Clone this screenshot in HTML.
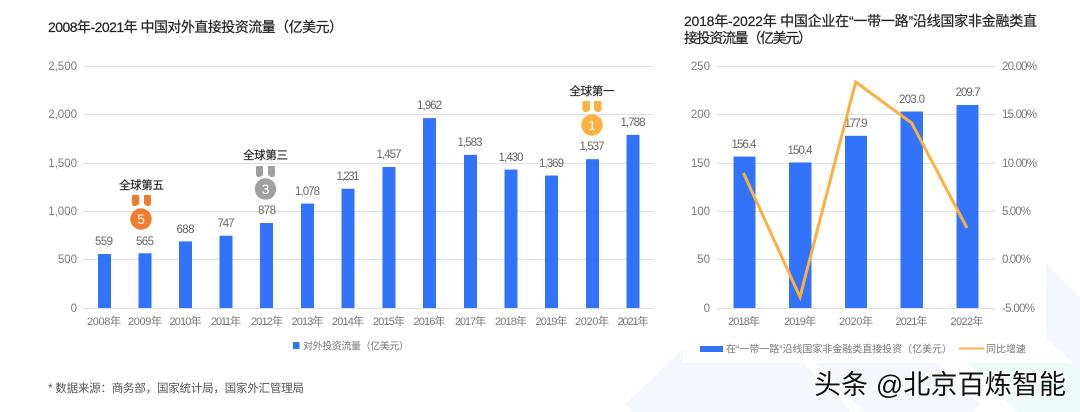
<!DOCTYPE html>
<html><head><meta charset="utf-8"><style>
html,body{margin:0;padding:0;background:#fff;width:1080px;height:412px;overflow:hidden}
svg{display:block}
.s{filter:blur(0.35px)}
text{font-family:"Liberation Sans","Noto Sans CJK SC",sans-serif}
.t{font-size:14px;fill:#222;stroke:#222;stroke-width:.2}
.a{font-size:11.5px;fill:#7a7a7a}
.v{font-size:11.5px;fill:#666;text-anchor:middle}
.x{font-size:11px;fill:#777;text-anchor:middle}
.e{text-anchor:end}
.l{font-size:10px;fill:#777}
.m{font-size:11.5px;fill:#222;text-anchor:middle;stroke:#222;stroke-width:.15}
.n{font-size:14px;fill:#fff;text-anchor:middle}
.g{stroke:#e0e0e2;stroke-width:1}
.b{fill:#3174fb}
</style></head><body>
<svg width="1080" height="412" viewBox="0 0 1080 412" xmlns="http://www.w3.org/2000/svg">
<rect width="1080" height="412" fill="#fff"/>
<g class="s">
<polygon points="625,404 683,349 683,363 803,363 852,412 632,412" fill="#f4f8fe"/>
<polygon points="815,363 937,363 980,405 973,412 864,412" fill="#f4f8fe"/>
<polygon points="968,363 1080,363 1080,412 1017,412" fill="#eefbf8"/>
<polygon points="1046,264 1080,298 1080,370 1046,338" fill="#f4f8fe"/>

<text class="t" x="48" y="32" textLength="295">2008年-2021年 中国对外直接投资流量（亿美元）</text>
<text class="t" x="684" y="26" textLength="353">2018年-2022年 中国企业在“一带一路”沿线国家非金融类直</text>
<text class="t" x="684" y="43" textLength="128">接投资流量（亿美元）</text>

<g class="g">
<line x1="84" x2="654" y1="66.5" y2="66.5"/><line x1="84" x2="654" y1="114.5" y2="114.5"/><line x1="84" x2="654" y1="163.5" y2="163.5"/><line x1="84" x2="654" y1="211.5" y2="211.5"/><line x1="84" x2="654" y1="259.5" y2="259.5"/><line x1="84" x2="654" y1="308.5" y2="308.5"/>
<line x1="717" x2="995" y1="66.5" y2="66.5"/><line x1="717" x2="995" y1="114.5" y2="114.5"/><line x1="717" x2="995" y1="163.5" y2="163.5"/><line x1="717" x2="995" y1="211.5" y2="211.5"/><line x1="717" x2="995" y1="259.5" y2="259.5"/><line x1="717" x2="995" y1="308.5" y2="308.5"/>
</g>

<g class="a e">
<text x="77" y="70">2,500</text><text x="77" y="118">2,000</text><text x="77" y="167">1,500</text><text x="77" y="215">1,000</text><text x="77" y="263">500</text><text x="77" y="312">0</text>
<text x="710" y="70">250</text><text x="710" y="118">200</text><text x="710" y="167">150</text><text x="710" y="215">100</text><text x="710" y="263">50</text><text x="710" y="312">0</text>
</g>
<g class="a">
<text x="1002" y="70" textLength="35">20.00%</text><text x="1002" y="118" textLength="35">15.00%</text><text x="1002" y="167" textLength="35">10.00%</text><text x="1002" y="215" textLength="29">5.00%</text><text x="1002" y="263" textLength="29">0.00%</text><text x="1002" y="312" textLength="33">-5.00%</text>
</g>

<g class="b">
<rect x="98" y="254" width="13" height="54"/><rect x="138.500" y="253.300" width="13" height="54.700"/><rect x="179" y="241.400" width="13" height="66.600"/><rect x="219.500" y="235.700" width="13" height="72.300"/><rect x="260" y="223" width="13" height="85"/><rect x="301" y="203.600" width="13" height="104.400"/><rect x="341.500" y="188.800" width="13" height="119.200"/><rect x="382.500" y="167" width="13" height="141"/><rect x="423" y="118.100" width="13" height="189.900"/><rect x="464" y="154.800" width="13" height="153.200"/><rect x="504.500" y="169.600" width="13" height="138.400"/><rect x="545" y="175.500" width="13" height="132.500"/><rect x="586" y="159.200" width="13" height="148.800"/><rect x="626.500" y="134.900" width="13" height="173.100"/>
<rect x="733.500" y="156.600" width="22" height="151.400"/><rect x="789" y="162.400" width="22.500" height="145.600"/><rect x="845" y="135.800" width="22" height="172.200"/><rect x="900.500" y="111.500" width="22.500" height="196.500"/><rect x="956.500" y="105" width="22" height="203"/>
</g>

<g class="v">
<text x="104" y="245" textLength="18">559</text><text x="145" y="245" textLength="18">565</text><text x="185.500" y="233" textLength="18">688</text><text x="226" y="227" textLength="17">747</text><text x="267" y="214" textLength="18">878</text>
<text x="307.500" y="195" textLength="25">1,078</text><text x="348" y="180" textLength="23">1,231</text><text x="389" y="158" textLength="25">1,457</text><text x="429.500" y="109" textLength="25">1,962</text><text x="470" y="146" textLength="25">1,583</text><text x="511" y="161" textLength="25">1,430</text><text x="551.500" y="167" textLength="25">1,369</text><text x="592" y="150" textLength="25">1,537</text><text x="633" y="126" textLength="25">1,788</text>
<text x="744" y="148" textLength="25">156.4</text><text x="800" y="154" textLength="25">150.4</text><text x="856" y="127" textLength="23">177.9</text><text x="912" y="103" textLength="26">203.0</text><text x="968" y="96" textLength="25">209.7</text>
</g>

<g class="x">
<text x="104" y="325" textLength="34">2008年</text><text x="145" y="325" textLength="34">2009年</text><text x="185.500" y="325" textLength="32">2010年</text><text x="226" y="325" textLength="30">2011年</text><text x="267" y="325" textLength="32">2012年</text><text x="307.500" y="325" textLength="32">2013年</text><text x="348" y="325" textLength="32">2014年</text><text x="389" y="325" textLength="32">2015年</text><text x="429.500" y="325" textLength="32">2016年</text><text x="470.500" y="325" textLength="31">2017年</text><text x="511" y="325" textLength="32">2018年</text><text x="551.500" y="325" textLength="32">2019年</text><text x="592" y="325" textLength="34">2020年</text><text x="633" y="325" textLength="31">2021年</text>
<text x="744" y="325" textLength="32">2018年</text><text x="800" y="325" textLength="32">2019年</text><text x="856" y="325" textLength="34">2020年</text><text x="911.500" y="325" textLength="32">2021年</text><text x="967" y="325" textLength="33">2022年</text>
</g>

<polyline points="743.500,173 800,297 855.700,82 911.700,123 967,228" fill="none" stroke="#fbb040" stroke-width="3" stroke-linejoin="miter"/>

<path d="M132 196q0-1 1-1h6v9l-3 2h-2.500l-1.500-2z" fill="#f07d2e"/><path d="M144 195h6q1 0 1 1v8l-1.500 2h-2.500l-3-2z" fill="#f07d2e"/>
<circle cx="141" cy="219" r="10.700" fill="#f07d2e"/><text class="n" x="141" y="224">5</text>
<text class="m" x="141.500" y="189" textLength="45">全球第五</text>

<path d="M256 167q0-1 1-1h6v9l-3 2h-2.500l-1.500-2z" fill="#a0a0a0"/><path d="M268 166h6q1 0 1 1v8l-1.500 2h-2.500l-3-2z" fill="#a0a0a0"/>
<circle cx="265.500" cy="189" r="10.700" fill="#a0a0a0"/><text class="n" x="265.500" y="194">3</text>
<text class="m" x="265.500" y="159" textLength="45">全球第三</text>

<path d="M582.500 102q0-1 1-1h6.500v9l-3 2h-3l-1.500-2z" fill="#fbb040"/><path d="M594 101h6.500q1 0 1 1v8l-1.500 2h-3l-3-2z" fill="#fbb040"/>
<circle cx="592" cy="125" r="10.700" fill="#fbb040"/><text class="n" x="592" y="130">1</text>
<text class="m" x="592" y="95" textLength="45">全球第一</text>

<rect x="293" y="342" width="6.500" height="7" fill="#3174fb"/>
<text class="l" x="303" y="349.500" textLength="106">对外投资流量（亿美元）</text>

<text x="48" y="392" font-size="11.5" fill="#555" textLength="256">* 数据来源：商务部，国家统计局，国家外汇管理局</text>

<rect x="700" y="346" width="23" height="6" fill="#3174fb"/>
<text class="l" x="726" y="352.500" textLength="226">在“一带一路”沿线国家非金融类直接投资（亿美元）</text>
<line x1="959" x2="984" y1="348.500" y2="348.500" stroke="#fbb040" stroke-width="2"/>
<text class="l" x="986" y="352.500" textLength="40">同比增速</text>
</g>

<text x="814" y="394" font-size="27" fill="#111" stroke="#fff" stroke-width="2" paint-order="stroke" textLength="252">头条 @北京百炼智能</text>
</svg>
</body></html>
